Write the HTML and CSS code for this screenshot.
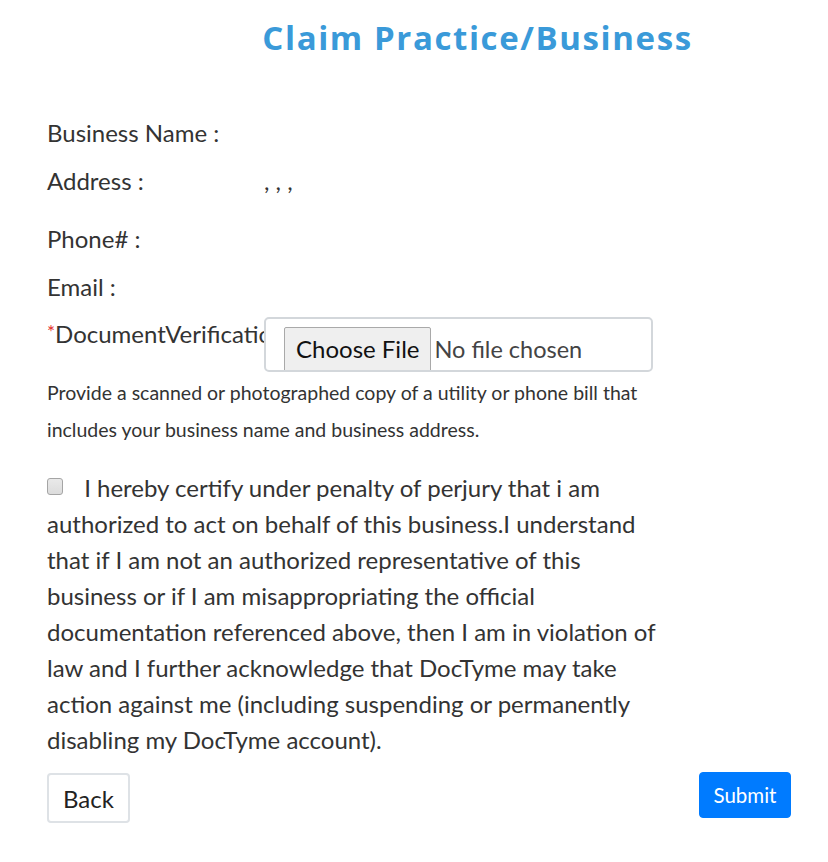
FILE: index.html
```html
<!DOCTYPE html>
<html lang="en">
<head>
<meta charset="utf-8">
<title>Claim Practice/Business</title>
<link rel="stylesheet" href="styles.css">
</head>
<body>
<div class="page">
  <h1 class="title">Claim Practice/Business</h1>
  <form class="form">
    <div class="content">
      <div class="row">
        <span class="label">Business Name :</span>
        <span class="value"></span>
      </div>
      <div class="row row-address">
        <span class="label">Address :</span>
        <span class="value">, , ,</span>
      </div>
      <div class="row">
        <span class="label">Phone# :</span>
        <span class="value"></span>
      </div>
      <div class="row">
        <span class="label">Email :</span>
        <span class="value"></span>
      </div>
      <div class="row row-file">
        <span class="label"><span class="req">*</span>DocumentVerification</span>
        <label class="file-box">
          <input class="file-input" type="file">
          <span class="file-btn">Choose File</span>
          <span class="file-name">No file chosen</span>
        </label>
      </div>
      <p class="help">Provide a scanned or photographed copy of a utility or phone bill that includes your business name and business address.</p>
      <p class="certify"><input class="check" type="checkbox"> I hereby certify under penalty of perjury that i am authorized to act on behalf of this business.I understand that if I am not an authorized representative of this business or if I am misappropriating the official documentation referenced above, then I am in violation of law and I further acknowledge that DocTyme may take action against me (including suspending or permanently disabling my DocTyme account).</p>
    </div>
    <div class="actions">
      <button type="button" class="btn btn-back">Back</button>
      <button type="submit" class="btn btn-submit">Submit</button>
    </div>
  </form>
</div>
</body>
</html>
```
FILE: styles.css
```css
* { box-sizing: border-box; }
html, body { margin: 0; padding: 0; background: #fff; }
body {
  font-family: Lato, "Open Sans", sans-serif;
  color: #333;
}
.page {
  width: 828px;
  padding: 0 37px 0 47px;
}
.title {
  margin: 0;
  padding: 16px 0 0 127px;
  margin-left: -47px;
  margin-right: -37px;
  text-align: center;
  font-family: "Open Sans", Lato, sans-serif;
  font-weight: 700;
  font-size: 33px;
  line-height: 44px;
  color: #3a9ad9;
  letter-spacing: 1.6px;
}
.form { margin-top: 56px; }
.content { width: 606px; }
.row {
  display: flex;
  align-items: flex-start;
  font-size: 24px;
  line-height: 33px;
  margin-bottom: 15px;
}
.row-address { margin-bottom: 25px; }
.label {
  flex: 0 0 217px;
  width: 217px;
  white-space: nowrap;
}
.value { flex: 1; }
.req { color: #e4312a; font-size: 19px; vertical-align: top; line-height: 30px; }
.row-file { margin-bottom: 0; margin-top: -1px; }
.file-box {
  flex: 0 0 389px;
  height: 55px;
  background: #fff;
  border: 2px solid #d3d7db;
  border-radius: 5px;
  overflow: hidden;
  display: flex;
  align-items: flex-start;
  padding: 8px 0 0 18px;
  cursor: pointer;
}
.file-input { display: none; }
.file-btn {
  display: block;
  height: 52px;
  padding: 5px 11px 0 11px;
  background: #efefef;
  border: 1px solid #a9a9a9;
  border-radius: 2px;
  color: #111;
  font-size: 24px;
  line-height: 32px;
}
.file-name {
  padding: 6px 0 0 3px;
  font-size: 23.5px;
  line-height: 32px;
  color: #444;
}
.help {
  margin: 2px 0 0 0;
  font-size: 19.5px;
  line-height: 37px;
}
.certify {
  width: 620px;
  margin: 22px 0 0 0;
  font-size: 24px;
  line-height: 36px;
}
.check {
  appearance: none;
  -webkit-appearance: none;
  width: 16px;
  height: 17px;
  margin: 0 15px 0 0;
  vertical-align: 2px;
  border: 1px solid #a5a5a5;
  border-radius: 3px;
  background: linear-gradient(#e9e9e9, #dcdcdc);
}
.actions {
  margin-top: 15px;
  display: flex;
  justify-content: space-between;
  align-items: flex-start;
  padding-bottom: 20px;
}
.btn {
  font-family: Lato, sans-serif;
  border-radius: 4px;
  cursor: pointer;
}
.btn-back {
  height: 50px;
  width: 83px;
  background: #fff;
  border: 2px solid #dee2e6;
  color: #222;
  font-size: 24px;
  padding: 0;
}
.btn-submit {
  height: 46px;
  width: 92px;
  background: #007bff;
  border: 1px solid #007bff;
  color: #fff;
  font-size: 20.5px;
  padding: 0;
  margin-top: -1px;
}
```
